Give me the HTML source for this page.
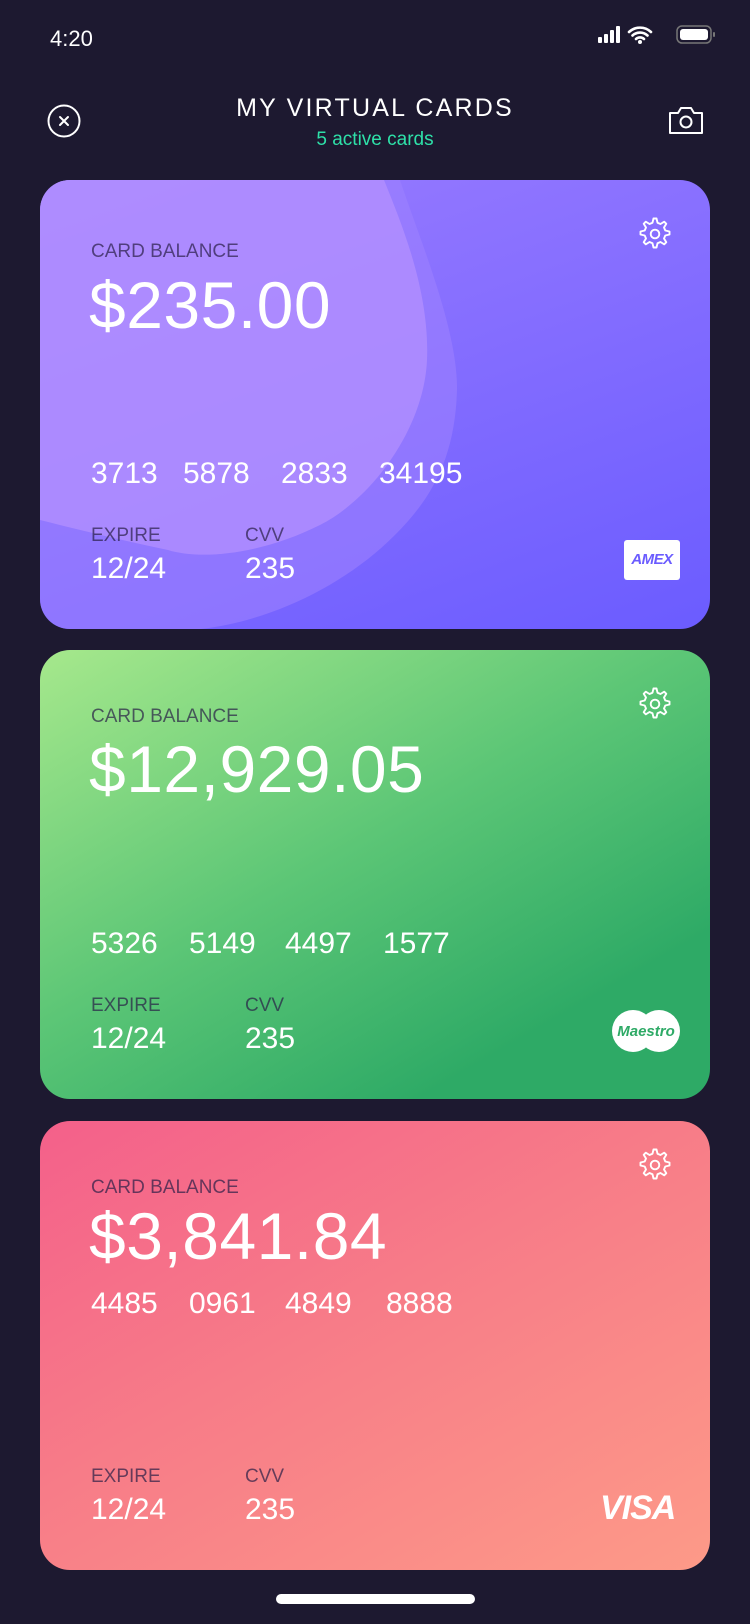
<!DOCTYPE html>
<html><head><meta charset="utf-8"><style>
*{margin:0;padding:0;box-sizing:border-box}
body{width:750px;height:1624px;background:#1d1930;font-family:"Liberation Sans",sans-serif;color:#fff;position:relative;overflow:hidden}
.a{position:absolute;white-space:nowrap;line-height:1}
.card{position:absolute;left:40px;width:670px;height:449px;border-radius:30px;overflow:hidden}
.lbl{font-size:19px;color:rgba(40,30,70,.7)}
.bal{font-size:66px;letter-spacing:0.5px}
.num{font-size:30px}
</style></head><body>
<div class="a" style="left:50px;top:28px;font-size:22px">4:20</div>
<svg class="a" style="left:597px;top:25px" width="120" height="22" viewBox="0 0 120 22">
<rect x="1" y="12" width="4" height="6" rx="1" fill="#fff"/><rect x="7" y="9" width="4" height="9" rx="1" fill="#fff"/><rect x="13" y="5" width="4" height="13" rx="1" fill="#fff"/><rect x="19" y="1" width="4" height="17" rx="1" fill="#fff"/>
<path d="M32 7a16 16 0 0 1 22 0M35.5 10.5a11 11 0 0 1 15 0M39 14a6 6 0 0 1 8 0" stroke="#fff" stroke-width="2.6" fill="none" stroke-linecap="round"/><circle cx="43" cy="17" r="2" fill="#fff"/>
<rect x="80" y="1" width="34" height="17" rx="5" fill="none" stroke="#777" stroke-width="1.5"/><rect x="83" y="4" width="28" height="11" rx="3" fill="#fff"/><rect x="116" y="7" width="2" height="5" rx="1" fill="#777"/></svg>
<div class="a" style="left:0;width:750px;text-align:center;top:96px;font-size:25px;letter-spacing:2.2px">MY VIRTUAL CARDS</div>
<div class="a" style="left:0;width:750px;text-align:center;top:130px;font-size:19px;color:#2ee0a8">5 active cards</div>
<svg class="a" style="left:47px;top:104px" width="34" height="34"><circle cx="17" cy="17" r="15.5" fill="none" stroke="#fff" stroke-width="2"/><path d="M13 13l8 8M21 13l-8 8" stroke="#fff" stroke-width="2" stroke-linecap="round"/></svg>
<svg class="a" style="left:667px;top:104px" width="38" height="32"><path d="M3 9h8l3-5h10l3 5h8v20H3z" fill="none" stroke="#fff" stroke-width="2" stroke-linejoin="round"/><circle cx="19" cy="18" r="5.5" fill="none" stroke="#fff" stroke-width="2"/></svg>

<!-- card 1 -->
<div class="card" style="top:180px;background:linear-gradient(160deg,#9a7cff,#6b5cff)">
<svg class="a" style="left:0;top:0" width="670" height="449"><path d="M0 0H360C380 60 418 150 417 210 C415 280 390 320 355 355 C300 410 220 445 150 450 L0 450Z" fill="#9d80ff" opacity=".6"/><path d="M0 0H344C360 40 390 110 387 180C384 250 330 320 280 345C220 375 160 380 128 370C80 360 40 350 0 340Z" fill="#b894ff" opacity=".65"/></svg>
<div class="a lbl" style="left:51px;top:62px">CARD BALANCE</div>
<div class="a bal" style="left:49px;top:92px">$235.00</div>
<div class="a num" style="left:51px;top:279px">3713</div><div class="a num" style="left:143px;top:279px">5878</div><div class="a num" style="left:241px;top:279px">2833</div><div class="a num" style="left:339px;top:279px">34195</div>
<div class="a lbl" style="left:51px;top:346px">EXPIRE</div><div class="a lbl" style="left:205px;top:346px">CVV</div>
<div class="a num" style="left:51px;top:374px">12/24</div><div class="a num" style="left:205px;top:374px">235</div>
<div class="a" style="left:584px;top:360px;width:56px;height:40px;background:#fff;border-radius:3px;color:#6b5cff;font-size:15px;font-weight:bold;font-style:italic;text-align:center;line-height:40px;letter-spacing:-0.5px">AMEX</div>
</div>
<!-- card 2 -->
<div class="card" style="top:650px;background:linear-gradient(150deg,#a6e88c 0%,#5cc676 45%,#2eaa66 80%)">
<div class="a lbl" style="left:51px;top:57px">CARD BALANCE</div>
<div class="a bal" style="left:49px;top:86px">$12,929.05</div>
<div class="a num" style="left:51px;top:279px">5326</div><div class="a num" style="left:149px;top:279px">5149</div><div class="a num" style="left:245px;top:279px">4497</div><div class="a num" style="left:343px;top:279px">1577</div>
<div class="a lbl" style="left:51px;top:346px">EXPIRE</div><div class="a lbl" style="left:205px;top:346px">CVV</div>
<div class="a num" style="left:51px;top:374px">12/24</div><div class="a num" style="left:205px;top:374px">235</div>
<svg class="a" style="left:570px;top:359px" width="72" height="44"><circle cx="23" cy="22" r="21" fill="#fff"/><circle cx="49" cy="22" r="21" fill="#fff"/><text x="36" y="27" text-anchor="middle" font-family="Liberation Sans" font-style="italic" font-weight="bold" font-size="15" fill="#2eaa66">Maestro</text></svg>
</div>
<!-- card 3 -->
<div class="card" style="top:1121px;background:linear-gradient(150deg,#f4608a 0%,#f77c88 45%,#fd9a88 100%)">
<div class="a lbl" style="left:51px;top:57px">CARD BALANCE</div>
<div class="a bal" style="left:49px;top:82px">$3,841.84</div>
<div class="a num" style="left:51px;top:168px">4485</div><div class="a num" style="left:149px;top:168px">0961</div><div class="a num" style="left:245px;top:168px">4849</div><div class="a num" style="left:346px;top:168px">8888</div>
<div class="a lbl" style="left:51px;top:346px">EXPIRE</div><div class="a lbl" style="left:205px;top:346px">CVV</div>
<div class="a num" style="left:51px;top:374px">12/24</div><div class="a num" style="left:205px;top:374px">235</div>
<div class="a" style="left:560px;top:370px;font-size:34px;font-weight:bold;font-style:italic;letter-spacing:-1px">VISA</div>
</div>
<!-- gears -->
<svg width="0" height="0" style="position:absolute"><defs><g id="g"><path d="M16.5 2.5h3l1 4.2 3 1.3 3.7-2.3 2.1 2.1-2.3 3.7 1.3 3 4.2 1v3l-4.2 1-1.3 3 2.3 3.7-2.1 2.1-3.7-2.3-3 1.3-1 4.2h-3l-1-4.2-3-1.3-3.7 2.3-2.1-2.1 2.3-3.7-1.3-3-4.2-1v-3l4.2-1 1.3-3-2.3-3.7 2.1-2.1 3.7 2.3 3-1.3z" fill="none" stroke="#fff" stroke-width="1.9" stroke-linejoin="round"/><circle cx="18" cy="18" r="4.3" fill="none" stroke="#fff" stroke-width="1.9"/></g></defs></svg>
<svg class="a" style="left:637px;top:216px" width="36" height="36"><use href="#g"/></svg>
<svg class="a" style="left:637px;top:686px" width="36" height="36"><use href="#g"/></svg>
<svg class="a" style="left:637px;top:1147px" width="36" height="36"><use href="#g"/></svg>
<div class="a" style="left:276px;top:1594px;width:199px;height:10px;border-radius:5px;background:#fff"></div>
</body></html>
